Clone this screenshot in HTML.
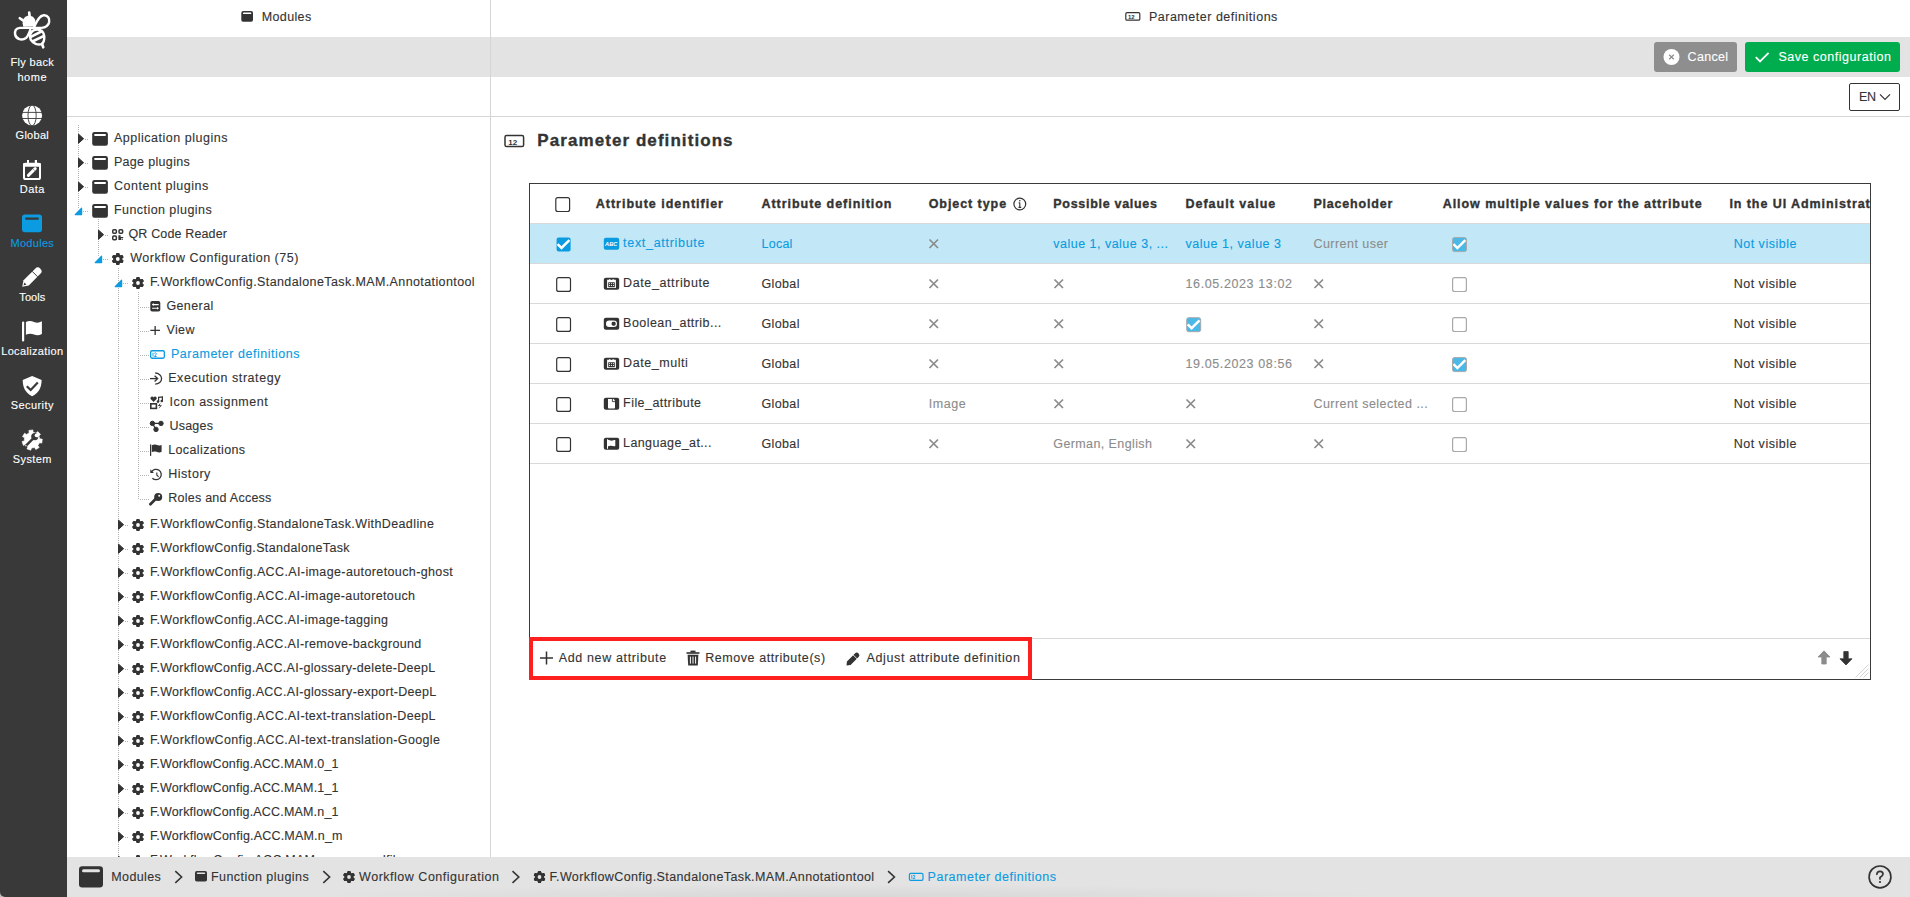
<!DOCTYPE html><html><head><meta charset="utf-8"><title>Parameter definitions</title><style>
*{box-sizing:border-box;margin:0;padding:0}
html,body{width:1910px;height:897px;overflow:hidden;background:#fff;font-family:"Liberation Sans",sans-serif;color:#333}
.a{position:absolute}
.t{position:absolute;white-space:pre;line-height:20px}
svg.ov{position:absolute;left:0;top:0;width:1910px;height:897px;overflow:visible}
</style></head><body>
<div class="a" style="left:0;top:889px;width:10px;height:8px;background:#bcbcbc"></div>
<div class="a" style="left:0;top:0;width:67px;height:897px;background:#393939;border-bottom-left-radius:5px"></div>
<div class="a" style="left:67px;top:37px;width:1843px;height:40px;background:#e3e3e3"></div>
<div class="a" style="left:67px;top:116px;width:1843px;height:1px;background:#d5d5d5"></div>
<div class="a" style="left:490px;top:0;width:1px;height:857px;background:#d5d5d5"></div>
<div class="a" style="left:1654px;top:42px;width:83px;height:30px;background:#8e8e8e;border-radius:3px"></div>
<div class="a" style="left:1745px;top:42px;width:155px;height:30px;background:#00ad4e;border-radius:3px"></div>
<div class="a" style="left:1849px;top:83px;width:51px;height:28px;border:1px solid #333333;border-radius:2px;background:#fff"></div>
<div class="a" style="left:529px;top:183px;width:1342px;height:497px;border:1px solid #3a3a3a"></div>
<div class="a" style="left:530px;top:224px;width:1340px;height:39px;background:#c2e8f7"></div>
<div class="a" style="left:530px;top:223px;width:1340px;height:1px;background:#d9d9d9"></div>
<div class="a" style="left:530px;top:263px;width:1340px;height:1px;background:#d9d9d9"></div>
<div class="a" style="left:530px;top:303px;width:1340px;height:1px;background:#d9d9d9"></div>
<div class="a" style="left:530px;top:343px;width:1340px;height:1px;background:#d9d9d9"></div>
<div class="a" style="left:530px;top:383px;width:1340px;height:1px;background:#d9d9d9"></div>
<div class="a" style="left:530px;top:423px;width:1340px;height:1px;background:#d9d9d9"></div>
<div class="a" style="left:530px;top:463px;width:1340px;height:1px;background:#d9d9d9"></div>
<div class="a" style="left:530px;top:638px;width:1340px;height:1px;background:#d9d9d9"></div>
<div class="a" style="left:529px;top:637px;width:503px;height:43px;border:4px solid #fe1f1f"></div>
<svg class="ov" viewBox="0 0 1910 897"><g transform="translate(8,5) scale(0.05574)" fill="none" stroke="#fff" stroke-width="44" stroke-linejoin="round" stroke-linecap="round"><path d="M262 330 C262 240 310 195 378 195 C450 195 495 245 495 320 L470 385 L275 390 Z" fill="#fff" stroke="none"/><path d="M212 238 L262 272" stroke-width="48"/><path d="M380 138 L388 200" stroke-width="48"/><path d="M400 410 L215 410 C140 410 118 470 128 530 C143 612 250 645 322 592 C352 567 372 522 400 445"/><path d="M470 390 C520 290 560 190 640 185 C722 180 748 250 738 310 C722 382 660 405 600 410 L400 410"/><path d="M398 530 C418 468 470 438 532 438 C602 438 645 500 650 560 C655 632 632 682 602 702 C540 722 448 692 408 622 C393 592 391 560 398 530 Z"/><path d="M400 575 L625 462" stroke-width="46" stroke-linecap="butt"/><path d="M438 655 L655 548" stroke-width="46" stroke-linecap="butt"/><path d="M612 700 L632 758" stroke-width="48"/></g><circle cx="32.1" cy="115.4" r="10" fill="#fff"/><g stroke="#393939" stroke-width="0.9" fill="none"><ellipse cx="32.1" cy="115.4" rx="4.1" ry="10.4"/><line x1="21" y1="112.4" x2="43" y2="112.4"/><line x1="21" y1="118.5" x2="43" y2="118.5"/></g><g><rect x="24" y="163.8" width="16" height="15.3" rx="1.6" fill="none" stroke="#fff" stroke-width="2"/><rect x="23" y="162.9" width="18" height="3.8" rx="1.2" fill="#fff"/><rect x="27" y="160" width="2" height="4" fill="#fff"/><rect x="34.8" y="160" width="2.2" height="4" fill="#fff"/><path d="M28.4 175.4 L35.2 168.6" stroke="#fff" stroke-width="3" stroke-linecap="round"/><path d="M33.3 169.3 L34.5 170.5" stroke="#393939" stroke-width="0.7"/></g><rect x="22" y="214.5" width="20" height="17.7" rx="3" fill="#0b9be0"/><rect x="25" y="217.5" width="14" height="2.2" rx="1.1" fill="#393939"/><g transform="translate(22.2,286.8) rotate(-45)"><path d="M0 0 L5.6 -3.7 L22 -3.7 A3.7 3.7 0 0 1 22 3.7 L5.6 3.7 Z" fill="#fff"/><line x1="18" y1="-3.9" x2="18" y2="3.9" stroke="#393939" stroke-width="0.9"/><path d="M1.8 0 L4.6 -1.4 L4.6 1.4 Z" fill="#393939"/></g><rect x="22" y="321.4" width="2.2" height="20" rx="1" fill="#fff"/><path d="M25.9 322 C29 320.6 31.5 321 34 322 C36.5 323 39 323 41.9 321.3 L41.9 334 C39 335.6 36.5 335.5 34 334.6 C31.5 333.6 29 333.4 25.9 334.8 Z" fill="#fff"/><path d="M32.1 376 L41.6 380 C41.6 388 38.5 393 32.1 396.2 C25.8 393 22.7 388 22.7 380 Z" fill="#fff"/><path d="M26.8 386.2 L30.7 390 L37.8 382.6" fill="none" stroke="#393939" stroke-width="2.2"/><path d="M39.91 438.92 L42.25 439.08 L41.84 443.11 L39.52 442.81 L37.89 445.47 L39.22 447.40 L35.82 449.60 L34.61 447.59 L31.51 447.98 L30.83 450.22 L26.99 448.93 L27.81 446.73 L25.57 444.55 L23.40 445.42 L22.01 441.61 L24.24 440.88 L24.55 437.77 L22.51 436.61 L24.63 433.16 L26.59 434.44 L29.21 432.75 L28.85 430.43 L32.87 429.93 L33.09 432.26 L36.05 433.26 L37.63 431.53 L40.53 434.36 L38.84 435.99 Z" fill="#fff" stroke="#fff" stroke-width="0.6" stroke-linejoin="round"/><g fill="#393939"><path d="M25.8 445.9 L33.5 438.2" stroke="#393939" stroke-width="2.4" stroke-linecap="round"/><circle cx="34.8" cy="436.6" r="3.6"/></g><circle cx="36.6" cy="435.3" r="1.9" fill="#fff"/><path d="M36.4 433.2 L39.6 434.8 L37.8 438.0 Z" fill="#fff"/><circle cx="25.9" cy="445.8" r="0.7" fill="#fff"/><rect x="241.3" y="11.1" width="11.7" height="10.6" rx="1.8" fill="#333333"/><rect x="243" y="12.6" width="8.3" height="1.5" rx="0.7" fill="#fff"/><rect x="1125.8" y="12.6" width="14" height="7.6" rx="1.3" fill="none" stroke="#333333" stroke-width="1.2"/><text x="1128" y="18.9" font-family="Liberation Sans" font-size="6" font-weight="bold" fill="#333333">12</text><circle cx="1671.5" cy="57" r="8" fill="#fff"/><path d="M1669.2 54.7 L1673.8 59.3 M1673.8 54.7 L1669.2 59.3" stroke="#8e8e8e" stroke-width="1.3"/><path d="M1755.8 57.2 L1760 61.4 L1768.6 52.8" fill="none" stroke="#fff" stroke-width="1.8"/><path d="M1880 94.3 L1885 99.3 L1890 94.3" fill="none" stroke="#333333" stroke-width="1.2"/><rect x="505" y="135.6" width="18.6" height="11" rx="1.6" fill="none" stroke="#333333" stroke-width="1.5"/><text x="508.3" y="144.6" font-family="Liberation Sans" font-size="8" font-weight="bold" fill="#333333">12</text><line x1="78.5" y1="125" x2="78.5" y2="208" stroke="#b5b5b5" stroke-width="1" stroke-dasharray="1 1"/><line x1="98.5" y1="219" x2="98.5" y2="256" stroke="#b5b5b5" stroke-width="1" stroke-dasharray="1 1"/><line x1="118.5" y1="268" x2="118.5" y2="857" stroke="#b5b5b5" stroke-width="1" stroke-dasharray="1 1"/><line x1="138.5" y1="292" x2="138.5" y2="499" stroke="#b5b5b5" stroke-width="1" stroke-dasharray="1 1"/><line x1="85" y1="139.5" x2="88" y2="139.5" stroke="#b5b5b5" stroke-width="1" stroke-dasharray="1 1"/><path d="M78.5 134.1 L83.6 138.7 L78.5 143.29999999999998 Z" fill="#333333" stroke="#333333" stroke-width="1" stroke-linejoin="round"/><rect x="92.2" y="132" width="15.7" height="13.8" rx="2.2" fill="#333333"/><rect x="94.10000000000001" y="133.9" width="11.9" height="2.1" rx="1" fill="#fff"/><line x1="85" y1="163.5" x2="88" y2="163.5" stroke="#b5b5b5" stroke-width="1" stroke-dasharray="1 1"/><path d="M78.5 158.1 L83.6 162.7 L78.5 167.29999999999998 Z" fill="#333333" stroke="#333333" stroke-width="1" stroke-linejoin="round"/><rect x="92.2" y="156" width="15.7" height="13.8" rx="2.2" fill="#333333"/><rect x="94.10000000000001" y="157.9" width="11.9" height="2.1" rx="1" fill="#fff"/><line x1="85" y1="187.5" x2="88" y2="187.5" stroke="#b5b5b5" stroke-width="1" stroke-dasharray="1 1"/><path d="M78.5 182.1 L83.6 186.7 L78.5 191.29999999999998 Z" fill="#333333" stroke="#333333" stroke-width="1" stroke-linejoin="round"/><rect x="92.2" y="180" width="15.7" height="13.8" rx="2.2" fill="#333333"/><rect x="94.10000000000001" y="181.9" width="11.9" height="2.1" rx="1" fill="#fff"/><line x1="83" y1="211.5" x2="88" y2="211.5" stroke="#b5b5b5" stroke-width="1" stroke-dasharray="1 1"/><path d="M75.19999999999999 214.6 L81.6 208.1 L81.6 214.6 Z" fill="#0b9be0" stroke="#0b9be0" stroke-width="1.2" stroke-linejoin="round"/><rect x="92.2" y="204" width="15.7" height="13.8" rx="2.2" fill="#333333"/><rect x="94.10000000000001" y="205.9" width="11.9" height="2.1" rx="1" fill="#fff"/><line x1="105" y1="235.5" x2="108" y2="235.5" stroke="#b5b5b5" stroke-width="1" stroke-dasharray="1 1"/><path d="M98.5 230.1 L103.6 234.7 L98.5 239.29999999999998 Z" fill="#333333" stroke="#333333" stroke-width="1" stroke-linejoin="round"/><rect x="112.75" y="229.75" width="3.6" height="3.6" rx="1" fill="none" stroke="#333333" stroke-width="1.5"/><rect x="119.05" y="229.75" width="3.6" height="3.6" rx="1" fill="none" stroke="#333333" stroke-width="1.5"/><rect x="112.75" y="236.05" width="3.6" height="3.6" rx="1" fill="none" stroke="#333333" stroke-width="1.5"/><path d="M118.4 235.3 h2.2 v1.6 h2.6 v1.2 h-2 v2 h-2.8 Z" fill="#333333"/><rect x="121.7" y="238.6" width="1.2" height="1.2" fill="#333333"/><line x1="103" y1="259.5" x2="108" y2="259.5" stroke="#b5b5b5" stroke-width="1" stroke-dasharray="1 1"/><path d="M95.19999999999999 262.59999999999997 L101.6 256.09999999999997 L101.6 262.59999999999997 Z" fill="#0b9be0" stroke="#0b9be0" stroke-width="1.2" stroke-linejoin="round"/><g transform="translate(117.8,259)" fill="#333333"><rect x="-1.70" y="-6.00" width="3.40" height="12.00" rx="1.20" transform="rotate(0)"/><rect x="-1.70" y="-6.00" width="3.40" height="12.00" rx="1.20" transform="rotate(60)"/><rect x="-1.70" y="-6.00" width="3.40" height="12.00" rx="1.20" transform="rotate(120)"/><rect x="-1.70" y="-6.00" width="3.40" height="12.00" rx="1.20" transform="rotate(180)"/><rect x="-1.70" y="-6.00" width="3.40" height="12.00" rx="1.20" transform="rotate(240)"/><rect x="-1.70" y="-6.00" width="3.40" height="12.00" rx="1.20" transform="rotate(300)"/><circle r="4.60"/><circle r="1.90" fill="#fff"/></g><line x1="123" y1="283.5" x2="128" y2="283.5" stroke="#b5b5b5" stroke-width="1" stroke-dasharray="1 1"/><path d="M115.19999999999999 286.59999999999997 L121.6 280.09999999999997 L121.6 286.59999999999997 Z" fill="#0b9be0" stroke="#0b9be0" stroke-width="1.2" stroke-linejoin="round"/><g transform="translate(138.0,283)" fill="#333333"><rect x="-1.70" y="-6.00" width="3.40" height="12.00" rx="1.20" transform="rotate(0)"/><rect x="-1.70" y="-6.00" width="3.40" height="12.00" rx="1.20" transform="rotate(60)"/><rect x="-1.70" y="-6.00" width="3.40" height="12.00" rx="1.20" transform="rotate(120)"/><rect x="-1.70" y="-6.00" width="3.40" height="12.00" rx="1.20" transform="rotate(180)"/><rect x="-1.70" y="-6.00" width="3.40" height="12.00" rx="1.20" transform="rotate(240)"/><rect x="-1.70" y="-6.00" width="3.40" height="12.00" rx="1.20" transform="rotate(300)"/><circle r="4.60"/><circle r="1.90" fill="#fff"/></g><line x1="140" y1="307.5" x2="149" y2="307.5" stroke="#b5b5b5" stroke-width="1" stroke-dasharray="1 1"/><rect x="150.3" y="301" width="10" height="10.6" rx="1.8" fill="#333333"/><path d="M152.5 304.6 h6.2 M152.10000000000002 308.2 h6.0" stroke="#fff" stroke-width="1.1"/><path d="M151.9 304.6 l1.8 -1.5 v3 Z M158.9 308.2 l-1.8 -1.5 v3 Z" fill="#fff"/><line x1="140" y1="331.5" x2="149" y2="331.5" stroke="#b5b5b5" stroke-width="1" stroke-dasharray="1 1"/><path d="M155.15 325.9 v9 M150.3 330.4 h9.7" stroke="#333333" stroke-width="1.3"/><line x1="140" y1="355.5" x2="149" y2="355.5" stroke="#b5b5b5" stroke-width="1" stroke-dasharray="1 1"/><rect x="150.65" y="350.75" width="13.7" height="7.500000000000001" rx="1.4" fill="none" stroke="#0b9be0" stroke-width="1.3"/><path d="M153 352.70000000000005 v3.8 M154.4 353.3 q1.6 -1.2 1.9 0.3 q0 1 -1.9 2.9 h2.2" fill="none" stroke="#0b9be0" stroke-width="0.9"/><line x1="140" y1="379.5" x2="149" y2="379.5" stroke="#b5b5b5" stroke-width="1" stroke-dasharray="1 1"/><path d="M150 378.6 h7.2" stroke="#333333" stroke-width="1.3"/><path d="M154.6 375.8 L157.6 378.6 L154.6 381.40000000000003" fill="none" stroke="#333333" stroke-width="1.3"/><path d="M155.2 373.0 A6.4 5.6 0 0 1 155.2 384.20000000000005" fill="none" stroke="#333333" stroke-width="1.3"/><line x1="140" y1="403.5" x2="149" y2="403.5" stroke="#b5b5b5" stroke-width="1" stroke-dasharray="1 1"/><path d="M153.6 402.0 L150.6 399.0 A1.6 1.6 0 0 1 153.6 397.5 A1.6 1.6 0 0 1 156.6 399.0 Z" fill="#333333"/><path d="M158.6 401.40000000000003 V397.40000000000003 L162.4 396.90000000000003 V400.8" fill="none" stroke="#333333" stroke-width="1.2"/><circle cx="158.0" cy="401.6" r="1.3" fill="#333333"/><circle cx="161.8" cy="401.0" r="1.3" fill="#333333"/><rect x="150.8" y="403.8" width="5.6" height="4.6" fill="none" stroke="#333333" stroke-width="1.6"/><path d="M160.6 402.8 L157.8 406.0 H160 L158.6 408.8 L162.0 405.20000000000005 H159.8 Z" fill="#333333"/><line x1="140" y1="427.5" x2="149" y2="427.5" stroke="#b5b5b5" stroke-width="1" stroke-dasharray="1 1"/><g fill="#333333" stroke="#333333"><circle cx="152.4" cy="423.40000000000003" r="2.2"/><circle cx="161.0" cy="423.40000000000003" r="2.2"/><circle cx="156.0" cy="429.40000000000003" r="2.2"/><path d="M152.4 423.40000000000003 H161 M152.4 423.40000000000003 L156 429.40000000000003" stroke-width="1.2"/></g><line x1="140" y1="451.5" x2="149" y2="451.5" stroke="#b5b5b5" stroke-width="1" stroke-dasharray="1 1"/><rect x="150" y="444.4" width="1.2" height="11.5" fill="#333333"/><path d="M151.8 445.2 C154 444.2 156 444.59999999999997 158 445.2 C159.8 445.7 160.8 445.4 161.6 445.0 V451.79999999999995 C160 452.79999999999995 158 452.4 156.5 451.79999999999995 C154.8 451.2 153.2 451.59999999999997 151.8 452.0 Z" fill="#333333"/><line x1="140" y1="475.5" x2="149" y2="475.5" stroke="#b5b5b5" stroke-width="1" stroke-dasharray="1 1"/><path d="M151.6 471.79999999999995 A5.2 5.2 0 1 1 152.4 478.2" fill="none" stroke="#333333" stroke-width="1.3"/><path d="M150.3 469.2 L150.3 473.0 L153.9 473.0 Z" fill="#333333"/><path d="M156.8 472.59999999999997 V475.0 L158.6 476.79999999999995" fill="none" stroke="#333333" stroke-width="1.1"/><line x1="140" y1="499.5" x2="149" y2="499.5" stroke="#b5b5b5" stroke-width="1" stroke-dasharray="1 1"/><g fill="#333333"><circle cx="158.2" cy="497.0" r="4.0"/><path d="M150.4 504.20000000000005 L155.6 499.0" stroke="#333333" stroke-width="2.7" stroke-linecap="round"/></g><circle cx="159.2" cy="495.8" r="1.0" fill="#fff"/><line x1="125" y1="525.5" x2="128" y2="525.5" stroke="#b5b5b5" stroke-width="1" stroke-dasharray="1 1"/><path d="M118.5 520.1 L123.6 524.7 L118.5 529.3000000000001 Z" fill="#333333" stroke="#333333" stroke-width="1" stroke-linejoin="round"/><g transform="translate(138.0,525)" fill="#333333"><rect x="-1.70" y="-6.00" width="3.40" height="12.00" rx="1.20" transform="rotate(0)"/><rect x="-1.70" y="-6.00" width="3.40" height="12.00" rx="1.20" transform="rotate(60)"/><rect x="-1.70" y="-6.00" width="3.40" height="12.00" rx="1.20" transform="rotate(120)"/><rect x="-1.70" y="-6.00" width="3.40" height="12.00" rx="1.20" transform="rotate(180)"/><rect x="-1.70" y="-6.00" width="3.40" height="12.00" rx="1.20" transform="rotate(240)"/><rect x="-1.70" y="-6.00" width="3.40" height="12.00" rx="1.20" transform="rotate(300)"/><circle r="4.60"/><circle r="1.90" fill="#fff"/></g><line x1="125" y1="549.5" x2="128" y2="549.5" stroke="#b5b5b5" stroke-width="1" stroke-dasharray="1 1"/><path d="M118.5 544.1 L123.6 548.7 L118.5 553.3000000000001 Z" fill="#333333" stroke="#333333" stroke-width="1" stroke-linejoin="round"/><g transform="translate(138.0,549)" fill="#333333"><rect x="-1.70" y="-6.00" width="3.40" height="12.00" rx="1.20" transform="rotate(0)"/><rect x="-1.70" y="-6.00" width="3.40" height="12.00" rx="1.20" transform="rotate(60)"/><rect x="-1.70" y="-6.00" width="3.40" height="12.00" rx="1.20" transform="rotate(120)"/><rect x="-1.70" y="-6.00" width="3.40" height="12.00" rx="1.20" transform="rotate(180)"/><rect x="-1.70" y="-6.00" width="3.40" height="12.00" rx="1.20" transform="rotate(240)"/><rect x="-1.70" y="-6.00" width="3.40" height="12.00" rx="1.20" transform="rotate(300)"/><circle r="4.60"/><circle r="1.90" fill="#fff"/></g><line x1="125" y1="573.5" x2="128" y2="573.5" stroke="#b5b5b5" stroke-width="1" stroke-dasharray="1 1"/><path d="M118.5 568.1 L123.6 572.7 L118.5 577.3000000000001 Z" fill="#333333" stroke="#333333" stroke-width="1" stroke-linejoin="round"/><g transform="translate(138.0,573)" fill="#333333"><rect x="-1.70" y="-6.00" width="3.40" height="12.00" rx="1.20" transform="rotate(0)"/><rect x="-1.70" y="-6.00" width="3.40" height="12.00" rx="1.20" transform="rotate(60)"/><rect x="-1.70" y="-6.00" width="3.40" height="12.00" rx="1.20" transform="rotate(120)"/><rect x="-1.70" y="-6.00" width="3.40" height="12.00" rx="1.20" transform="rotate(180)"/><rect x="-1.70" y="-6.00" width="3.40" height="12.00" rx="1.20" transform="rotate(240)"/><rect x="-1.70" y="-6.00" width="3.40" height="12.00" rx="1.20" transform="rotate(300)"/><circle r="4.60"/><circle r="1.90" fill="#fff"/></g><line x1="125" y1="597.5" x2="128" y2="597.5" stroke="#b5b5b5" stroke-width="1" stroke-dasharray="1 1"/><path d="M118.5 592.1 L123.6 596.7 L118.5 601.3000000000001 Z" fill="#333333" stroke="#333333" stroke-width="1" stroke-linejoin="round"/><g transform="translate(138.0,597)" fill="#333333"><rect x="-1.70" y="-6.00" width="3.40" height="12.00" rx="1.20" transform="rotate(0)"/><rect x="-1.70" y="-6.00" width="3.40" height="12.00" rx="1.20" transform="rotate(60)"/><rect x="-1.70" y="-6.00" width="3.40" height="12.00" rx="1.20" transform="rotate(120)"/><rect x="-1.70" y="-6.00" width="3.40" height="12.00" rx="1.20" transform="rotate(180)"/><rect x="-1.70" y="-6.00" width="3.40" height="12.00" rx="1.20" transform="rotate(240)"/><rect x="-1.70" y="-6.00" width="3.40" height="12.00" rx="1.20" transform="rotate(300)"/><circle r="4.60"/><circle r="1.90" fill="#fff"/></g><line x1="125" y1="621.5" x2="128" y2="621.5" stroke="#b5b5b5" stroke-width="1" stroke-dasharray="1 1"/><path d="M118.5 616.1 L123.6 620.7 L118.5 625.3000000000001 Z" fill="#333333" stroke="#333333" stroke-width="1" stroke-linejoin="round"/><g transform="translate(138.0,621)" fill="#333333"><rect x="-1.70" y="-6.00" width="3.40" height="12.00" rx="1.20" transform="rotate(0)"/><rect x="-1.70" y="-6.00" width="3.40" height="12.00" rx="1.20" transform="rotate(60)"/><rect x="-1.70" y="-6.00" width="3.40" height="12.00" rx="1.20" transform="rotate(120)"/><rect x="-1.70" y="-6.00" width="3.40" height="12.00" rx="1.20" transform="rotate(180)"/><rect x="-1.70" y="-6.00" width="3.40" height="12.00" rx="1.20" transform="rotate(240)"/><rect x="-1.70" y="-6.00" width="3.40" height="12.00" rx="1.20" transform="rotate(300)"/><circle r="4.60"/><circle r="1.90" fill="#fff"/></g><line x1="125" y1="645.5" x2="128" y2="645.5" stroke="#b5b5b5" stroke-width="1" stroke-dasharray="1 1"/><path d="M118.5 640.1 L123.6 644.7 L118.5 649.3000000000001 Z" fill="#333333" stroke="#333333" stroke-width="1" stroke-linejoin="round"/><g transform="translate(138.0,645)" fill="#333333"><rect x="-1.70" y="-6.00" width="3.40" height="12.00" rx="1.20" transform="rotate(0)"/><rect x="-1.70" y="-6.00" width="3.40" height="12.00" rx="1.20" transform="rotate(60)"/><rect x="-1.70" y="-6.00" width="3.40" height="12.00" rx="1.20" transform="rotate(120)"/><rect x="-1.70" y="-6.00" width="3.40" height="12.00" rx="1.20" transform="rotate(180)"/><rect x="-1.70" y="-6.00" width="3.40" height="12.00" rx="1.20" transform="rotate(240)"/><rect x="-1.70" y="-6.00" width="3.40" height="12.00" rx="1.20" transform="rotate(300)"/><circle r="4.60"/><circle r="1.90" fill="#fff"/></g><line x1="125" y1="669.5" x2="128" y2="669.5" stroke="#b5b5b5" stroke-width="1" stroke-dasharray="1 1"/><path d="M118.5 664.1 L123.6 668.7 L118.5 673.3000000000001 Z" fill="#333333" stroke="#333333" stroke-width="1" stroke-linejoin="round"/><g transform="translate(138.0,669)" fill="#333333"><rect x="-1.70" y="-6.00" width="3.40" height="12.00" rx="1.20" transform="rotate(0)"/><rect x="-1.70" y="-6.00" width="3.40" height="12.00" rx="1.20" transform="rotate(60)"/><rect x="-1.70" y="-6.00" width="3.40" height="12.00" rx="1.20" transform="rotate(120)"/><rect x="-1.70" y="-6.00" width="3.40" height="12.00" rx="1.20" transform="rotate(180)"/><rect x="-1.70" y="-6.00" width="3.40" height="12.00" rx="1.20" transform="rotate(240)"/><rect x="-1.70" y="-6.00" width="3.40" height="12.00" rx="1.20" transform="rotate(300)"/><circle r="4.60"/><circle r="1.90" fill="#fff"/></g><line x1="125" y1="693.5" x2="128" y2="693.5" stroke="#b5b5b5" stroke-width="1" stroke-dasharray="1 1"/><path d="M118.5 688.1 L123.6 692.7 L118.5 697.3000000000001 Z" fill="#333333" stroke="#333333" stroke-width="1" stroke-linejoin="round"/><g transform="translate(138.0,693)" fill="#333333"><rect x="-1.70" y="-6.00" width="3.40" height="12.00" rx="1.20" transform="rotate(0)"/><rect x="-1.70" y="-6.00" width="3.40" height="12.00" rx="1.20" transform="rotate(60)"/><rect x="-1.70" y="-6.00" width="3.40" height="12.00" rx="1.20" transform="rotate(120)"/><rect x="-1.70" y="-6.00" width="3.40" height="12.00" rx="1.20" transform="rotate(180)"/><rect x="-1.70" y="-6.00" width="3.40" height="12.00" rx="1.20" transform="rotate(240)"/><rect x="-1.70" y="-6.00" width="3.40" height="12.00" rx="1.20" transform="rotate(300)"/><circle r="4.60"/><circle r="1.90" fill="#fff"/></g><line x1="125" y1="717.5" x2="128" y2="717.5" stroke="#b5b5b5" stroke-width="1" stroke-dasharray="1 1"/><path d="M118.5 712.1 L123.6 716.7 L118.5 721.3000000000001 Z" fill="#333333" stroke="#333333" stroke-width="1" stroke-linejoin="round"/><g transform="translate(138.0,717)" fill="#333333"><rect x="-1.70" y="-6.00" width="3.40" height="12.00" rx="1.20" transform="rotate(0)"/><rect x="-1.70" y="-6.00" width="3.40" height="12.00" rx="1.20" transform="rotate(60)"/><rect x="-1.70" y="-6.00" width="3.40" height="12.00" rx="1.20" transform="rotate(120)"/><rect x="-1.70" y="-6.00" width="3.40" height="12.00" rx="1.20" transform="rotate(180)"/><rect x="-1.70" y="-6.00" width="3.40" height="12.00" rx="1.20" transform="rotate(240)"/><rect x="-1.70" y="-6.00" width="3.40" height="12.00" rx="1.20" transform="rotate(300)"/><circle r="4.60"/><circle r="1.90" fill="#fff"/></g><line x1="125" y1="741.5" x2="128" y2="741.5" stroke="#b5b5b5" stroke-width="1" stroke-dasharray="1 1"/><path d="M118.5 736.1 L123.6 740.7 L118.5 745.3000000000001 Z" fill="#333333" stroke="#333333" stroke-width="1" stroke-linejoin="round"/><g transform="translate(138.0,741)" fill="#333333"><rect x="-1.70" y="-6.00" width="3.40" height="12.00" rx="1.20" transform="rotate(0)"/><rect x="-1.70" y="-6.00" width="3.40" height="12.00" rx="1.20" transform="rotate(60)"/><rect x="-1.70" y="-6.00" width="3.40" height="12.00" rx="1.20" transform="rotate(120)"/><rect x="-1.70" y="-6.00" width="3.40" height="12.00" rx="1.20" transform="rotate(180)"/><rect x="-1.70" y="-6.00" width="3.40" height="12.00" rx="1.20" transform="rotate(240)"/><rect x="-1.70" y="-6.00" width="3.40" height="12.00" rx="1.20" transform="rotate(300)"/><circle r="4.60"/><circle r="1.90" fill="#fff"/></g><line x1="125" y1="765.5" x2="128" y2="765.5" stroke="#b5b5b5" stroke-width="1" stroke-dasharray="1 1"/><path d="M118.5 760.1 L123.6 764.7 L118.5 769.3000000000001 Z" fill="#333333" stroke="#333333" stroke-width="1" stroke-linejoin="round"/><g transform="translate(138.0,765)" fill="#333333"><rect x="-1.70" y="-6.00" width="3.40" height="12.00" rx="1.20" transform="rotate(0)"/><rect x="-1.70" y="-6.00" width="3.40" height="12.00" rx="1.20" transform="rotate(60)"/><rect x="-1.70" y="-6.00" width="3.40" height="12.00" rx="1.20" transform="rotate(120)"/><rect x="-1.70" y="-6.00" width="3.40" height="12.00" rx="1.20" transform="rotate(180)"/><rect x="-1.70" y="-6.00" width="3.40" height="12.00" rx="1.20" transform="rotate(240)"/><rect x="-1.70" y="-6.00" width="3.40" height="12.00" rx="1.20" transform="rotate(300)"/><circle r="4.60"/><circle r="1.90" fill="#fff"/></g><line x1="125" y1="789.5" x2="128" y2="789.5" stroke="#b5b5b5" stroke-width="1" stroke-dasharray="1 1"/><path d="M118.5 784.1 L123.6 788.7 L118.5 793.3000000000001 Z" fill="#333333" stroke="#333333" stroke-width="1" stroke-linejoin="round"/><g transform="translate(138.0,789)" fill="#333333"><rect x="-1.70" y="-6.00" width="3.40" height="12.00" rx="1.20" transform="rotate(0)"/><rect x="-1.70" y="-6.00" width="3.40" height="12.00" rx="1.20" transform="rotate(60)"/><rect x="-1.70" y="-6.00" width="3.40" height="12.00" rx="1.20" transform="rotate(120)"/><rect x="-1.70" y="-6.00" width="3.40" height="12.00" rx="1.20" transform="rotate(180)"/><rect x="-1.70" y="-6.00" width="3.40" height="12.00" rx="1.20" transform="rotate(240)"/><rect x="-1.70" y="-6.00" width="3.40" height="12.00" rx="1.20" transform="rotate(300)"/><circle r="4.60"/><circle r="1.90" fill="#fff"/></g><line x1="125" y1="813.5" x2="128" y2="813.5" stroke="#b5b5b5" stroke-width="1" stroke-dasharray="1 1"/><path d="M118.5 808.1 L123.6 812.7 L118.5 817.3000000000001 Z" fill="#333333" stroke="#333333" stroke-width="1" stroke-linejoin="round"/><g transform="translate(138.0,813)" fill="#333333"><rect x="-1.70" y="-6.00" width="3.40" height="12.00" rx="1.20" transform="rotate(0)"/><rect x="-1.70" y="-6.00" width="3.40" height="12.00" rx="1.20" transform="rotate(60)"/><rect x="-1.70" y="-6.00" width="3.40" height="12.00" rx="1.20" transform="rotate(120)"/><rect x="-1.70" y="-6.00" width="3.40" height="12.00" rx="1.20" transform="rotate(180)"/><rect x="-1.70" y="-6.00" width="3.40" height="12.00" rx="1.20" transform="rotate(240)"/><rect x="-1.70" y="-6.00" width="3.40" height="12.00" rx="1.20" transform="rotate(300)"/><circle r="4.60"/><circle r="1.90" fill="#fff"/></g><line x1="125" y1="837.5" x2="128" y2="837.5" stroke="#b5b5b5" stroke-width="1" stroke-dasharray="1 1"/><path d="M118.5 832.1 L123.6 836.7 L118.5 841.3000000000001 Z" fill="#333333" stroke="#333333" stroke-width="1" stroke-linejoin="round"/><g transform="translate(138.0,837)" fill="#333333"><rect x="-1.70" y="-6.00" width="3.40" height="12.00" rx="1.20" transform="rotate(0)"/><rect x="-1.70" y="-6.00" width="3.40" height="12.00" rx="1.20" transform="rotate(60)"/><rect x="-1.70" y="-6.00" width="3.40" height="12.00" rx="1.20" transform="rotate(120)"/><rect x="-1.70" y="-6.00" width="3.40" height="12.00" rx="1.20" transform="rotate(180)"/><rect x="-1.70" y="-6.00" width="3.40" height="12.00" rx="1.20" transform="rotate(240)"/><rect x="-1.70" y="-6.00" width="3.40" height="12.00" rx="1.20" transform="rotate(300)"/><circle r="4.60"/><circle r="1.90" fill="#fff"/></g><line x1="125" y1="861.5" x2="128" y2="861.5" stroke="#b5b5b5" stroke-width="1" stroke-dasharray="1 1"/><path d="M118.5 856.1 L123.6 860.7 L118.5 865.3000000000001 Z" fill="#333333" stroke="#333333" stroke-width="1" stroke-linejoin="round"/><g transform="translate(138.0,861)" fill="#333333"><rect x="-1.70" y="-6.00" width="3.40" height="12.00" rx="1.20" transform="rotate(0)"/><rect x="-1.70" y="-6.00" width="3.40" height="12.00" rx="1.20" transform="rotate(60)"/><rect x="-1.70" y="-6.00" width="3.40" height="12.00" rx="1.20" transform="rotate(120)"/><rect x="-1.70" y="-6.00" width="3.40" height="12.00" rx="1.20" transform="rotate(180)"/><rect x="-1.70" y="-6.00" width="3.40" height="12.00" rx="1.20" transform="rotate(240)"/><rect x="-1.70" y="-6.00" width="3.40" height="12.00" rx="1.20" transform="rotate(300)"/><circle r="4.60"/><circle r="1.90" fill="#fff"/></g><rect x="555.8000000000001" y="197.7" width="13.8" height="13.8" rx="2" fill="#fff" stroke="#333333" stroke-width="1.2"/><circle cx="1019.8" cy="204" r="5.9" fill="none" stroke="#333333" stroke-width="1.2"/><path d="M1019.8 202.6 V207.2 M1018.5 207.4 H1021.2 M1018.6 202.7 H1019.8" stroke="#333333" stroke-width="1.1"/><circle cx="1019.8" cy="200.7" r="0.8" fill="#333333"/><rect x="556.6" y="237.5" width="14" height="14" rx="2" fill="#0b9be0"/><path d="M557.6 244.1 L561.5 248 L569.4 240.1" fill="none" stroke="#fff" stroke-width="2.5"/><rect x="603.8" y="237.65" width="15.4" height="12.2" rx="2" fill="#0b9be0"/><text x="605.0999999999999" y="246.05" font-family="Liberation Sans" font-size="5.6" font-weight="bold" font-style="italic" fill="#fff">ABC</text><path d="M929.5 239.5 L938 248 M938 239.5 L929.5 248" stroke="#8a8a8a" stroke-width="1.7"/><rect x="1452.5" y="237.6" width="14" height="14" rx="2" fill="#4ab9e8" stroke="#a9a9a9" stroke-width="1"/><path d="M1453.5 244.2 L1457.4 248.1 L1465.3 240.2" fill="none" stroke="#fff" stroke-width="2.5"/><rect x="556.7" y="277.6" width="13.8" height="13.8" rx="2" fill="#fff" stroke="#333333" stroke-width="1.2"/><rect x="603.8" y="277.65" width="15.4" height="12.2" rx="2" fill="#333333"/><path d="M607.0999999999999 279.65 H609.0 Q609.5 278.84999999999997 610.0999999999999 279.25 Q611.5 280.65 612.9 279.25 Q613.5 278.84999999999997 614.0 279.65 H615.9 V288.04999999999995 H607.0999999999999 Z" fill="#fff"/><rect x="608.1999999999999" y="282.15" width="6.6" height="5.0" rx="0.5" fill="#333333"/><circle cx="609.40" cy="283.45" r="0.55" fill="#fff"/><circle cx="609.40" cy="285.40" r="0.55" fill="#fff"/><circle cx="611.40" cy="283.45" r="0.55" fill="#fff"/><circle cx="611.40" cy="285.40" r="0.55" fill="#fff"/><circle cx="613.40" cy="283.45" r="0.55" fill="#fff"/><circle cx="613.40" cy="285.40" r="0.55" fill="#fff"/><path d="M929.5 279.5 L938 288 M938 279.5 L929.5 288" stroke="#8a8a8a" stroke-width="1.7"/><path d="M1054.5 279.5 L1063 288 M1063 279.5 L1054.5 288" stroke="#8a8a8a" stroke-width="1.7"/><path d="M1314.5 279.5 L1323 288 M1323 279.5 L1314.5 288" stroke="#8a8a8a" stroke-width="1.7"/><rect x="1452.6" y="277.70000000000005" width="13.8" height="13.8" rx="2" fill="#fff" stroke="#a9a9a9" stroke-width="1.2"/><rect x="556.7" y="317.6" width="13.8" height="13.8" rx="2" fill="#fff" stroke="#333333" stroke-width="1.2"/><rect x="603.8" y="317.65" width="15.4" height="12.2" rx="2" fill="#333333"/><rect x="606.0" y="320.54999999999995" width="11" height="6.4" rx="3.2" fill="#fff"/><rect x="611.6999999999999" y="321.75" width="3.9" height="4" rx="1.4" fill="#333333"/><path d="M929.5 319.5 L938 328 M938 319.5 L929.5 328" stroke="#8a8a8a" stroke-width="1.7"/><path d="M1054.5 319.5 L1063 328 M1063 319.5 L1054.5 328" stroke="#8a8a8a" stroke-width="1.7"/><rect x="1186.7" y="317.7" width="14" height="14" rx="2" fill="#4ab9e8" stroke="#a9a9a9" stroke-width="1"/><path d="M1187.7 324.3 L1191.6000000000001 328.2 L1199.5 320.3" fill="none" stroke="#fff" stroke-width="2.5"/><path d="M1314.5 319.5 L1323 328 M1323 319.5 L1314.5 328" stroke="#8a8a8a" stroke-width="1.7"/><rect x="1452.6" y="317.70000000000005" width="13.8" height="13.8" rx="2" fill="#fff" stroke="#a9a9a9" stroke-width="1.2"/><rect x="556.7" y="357.6" width="13.8" height="13.8" rx="2" fill="#fff" stroke="#333333" stroke-width="1.2"/><rect x="603.8" y="357.65" width="15.4" height="12.2" rx="2" fill="#333333"/><path d="M607.0999999999999 359.65 H609.0 Q609.5 358.84999999999997 610.0999999999999 359.25 Q611.5 360.65 612.9 359.25 Q613.5 358.84999999999997 614.0 359.65 H615.9 V368.04999999999995 H607.0999999999999 Z" fill="#fff"/><rect x="608.1999999999999" y="362.15" width="6.6" height="5.0" rx="0.5" fill="#333333"/><circle cx="609.40" cy="363.45" r="0.55" fill="#fff"/><circle cx="609.40" cy="365.40" r="0.55" fill="#fff"/><circle cx="611.40" cy="363.45" r="0.55" fill="#fff"/><circle cx="611.40" cy="365.40" r="0.55" fill="#fff"/><circle cx="613.40" cy="363.45" r="0.55" fill="#fff"/><circle cx="613.40" cy="365.40" r="0.55" fill="#fff"/><path d="M929.5 359.5 L938 368 M938 359.5 L929.5 368" stroke="#8a8a8a" stroke-width="1.7"/><path d="M1054.5 359.5 L1063 368 M1063 359.5 L1054.5 368" stroke="#8a8a8a" stroke-width="1.7"/><path d="M1314.5 359.5 L1323 368 M1323 359.5 L1314.5 368" stroke="#8a8a8a" stroke-width="1.7"/><rect x="1452.5" y="357.6" width="14" height="14" rx="2" fill="#4ab9e8" stroke="#a9a9a9" stroke-width="1"/><path d="M1453.5 364.20000000000005 L1457.4 368.1 L1465.3 360.20000000000005" fill="none" stroke="#fff" stroke-width="2.5"/><rect x="556.7" y="397.6" width="13.8" height="13.8" rx="2" fill="#fff" stroke="#333333" stroke-width="1.2"/><rect x="603.8" y="397.65" width="15.4" height="12.2" rx="2" fill="#333333"/><path d="M608.0 398.95 H613.5999999999999 L615.0 400.45 V407.75 Q615.0 408.54999999999995 614.1999999999999 408.54999999999995 H608.8 Q608.0 408.54999999999995 608.0 407.75 Z" fill="#fff"/><path d="M612.4 398.84999999999997 V401.65 H615.1999999999999" fill="none" stroke="#333333" stroke-width="0.9"/><path d="M1054.5 399.5 L1063 408 M1063 399.5 L1054.5 408" stroke="#8a8a8a" stroke-width="1.7"/><path d="M1186.5 399.5 L1195 408 M1195 399.5 L1186.5 408" stroke="#8a8a8a" stroke-width="1.7"/><rect x="1452.6" y="397.70000000000005" width="13.8" height="13.8" rx="2" fill="#fff" stroke="#a9a9a9" stroke-width="1.2"/><rect x="556.7" y="437.6" width="13.8" height="13.8" rx="2" fill="#fff" stroke="#333333" stroke-width="1.2"/><rect x="603.8" y="437.65" width="15.4" height="12.2" rx="2" fill="#333333"/><path d="M607.0 439.25 H608.0 V448.65 H607.0 Z" fill="#fff"/><path d="M608.0 439.84999999999997 C609.8 440.45 611.8 441.04999999999995 613.4 440.25 C614.4 439.84999999999997 614.8 439.84999999999997 615.3 439.95 V446.04999999999995 C613.8 446.65 612.4 445.84999999999997 610.8 445.75 C609.5999999999999 445.65 608.8 445.95 608.0 446.25 Z" fill="#fff"/><path d="M929.5 439.5 L938 448 M938 439.5 L929.5 448" stroke="#8a8a8a" stroke-width="1.7"/><path d="M1186.5 439.5 L1195 448 M1195 439.5 L1186.5 448" stroke="#8a8a8a" stroke-width="1.7"/><path d="M1314.5 439.5 L1323 448 M1323 439.5 L1314.5 448" stroke="#8a8a8a" stroke-width="1.7"/><rect x="1452.6" y="437.70000000000005" width="13.8" height="13.8" rx="2" fill="#fff" stroke="#a9a9a9" stroke-width="1.2"/><path d="M546.5 651.4 V664.5 M540 657.95 H553" stroke="#333333" stroke-width="1.5"/><g fill="#333333"><rect x="686.5" y="652.2" width="13" height="1.6"/><rect x="690.5" y="650.6" width="5" height="2"/><path d="M687.6 654.8 H698.4 L697.8 665.6 H688.2 Z"/></g><path d="M690.4 656.6 V663.6 M693 656.6 V663.6 M695.6 656.6 V663.6" stroke="#fff" stroke-width="1"/><g transform="translate(846.5,665.5) rotate(-45)"><path d="M0 0 L3.2 -2.6 L14.5 -2.6 A2.6 2.6 0 0 1 14.5 2.6 L3.2 2.6 Z" fill="#333333"/><line x1="12.2" y1="-3" x2="12.2" y2="3" stroke="#fff" stroke-width="0.8"/></g><path d="M1824 650.8 L1830 657 H1826.2 V664 H1821.8 V657 H1818 Z" fill="#8c8c8c" stroke="#8c8c8c" stroke-width="0.8" stroke-linejoin="round"/><path d="M1846 665 L1852 658.8 H1848.2 V651.6 H1843.8 V658.8 H1840 Z" fill="#333333" stroke="#333333" stroke-width="0.8" stroke-linejoin="round"/><path d="M1855.5 677.5 L1868.5 664.5 M1859.5 677.5 L1868.5 668.5 M1863.5 677.5 L1868.5 672.5" stroke="#cfcfcf" stroke-width="0.9"/></svg>
<div class="t" style="left:10.57px;top:52.00px;font-size:11.0px;-webkit-text-stroke:0.12px #fff;font-weight:400;color:#fff;letter-spacing:0.312px">Fly back</div>
<div class="t" style="left:17.41px;top:67.00px;font-size:11.0px;-webkit-text-stroke:0.12px #fff;font-weight:400;color:#fff;letter-spacing:0.562px">home</div>
<div class="t" style="left:15.55px;top:124.70px;font-size:11.0px;-webkit-text-stroke:0.12px #fff;font-weight:400;color:#fff;letter-spacing:0.284px">Global</div>
<div class="t" style="left:19.76px;top:179.00px;font-size:11.0px;-webkit-text-stroke:0.12px #fff;font-weight:400;color:#fff;letter-spacing:0.457px">Data</div>
<div class="t" style="left:10.47px;top:232.80px;font-size:11.0px;-webkit-text-stroke:0.12px #0b9be0;font-weight:400;color:#0b9be0;letter-spacing:0.297px">Modules</div>
<div class="t" style="left:19.36px;top:286.70px;font-size:11.0px;-webkit-text-stroke:0.12px #fff;font-weight:400;color:#fff;letter-spacing:0.037px">Tools</div>
<div class="t" style="left:1.20px;top:340.50px;font-size:11.0px;-webkit-text-stroke:0.12px #fff;font-weight:400;color:#fff;letter-spacing:0.342px">Localization</div>
<div class="t" style="left:10.74px;top:394.80px;font-size:11.0px;-webkit-text-stroke:0.12px #fff;font-weight:400;color:#fff;letter-spacing:0.422px">Security</div>
<div class="t" style="left:12.72px;top:449.00px;font-size:11.0px;-webkit-text-stroke:0.12px #fff;font-weight:400;color:#fff;letter-spacing:0.411px">System</div>
<div class="t" style="left:261.70px;top:6.80px;font-size:12.5px;-webkit-text-stroke:0.12px #333333;font-weight:400;color:#333333;letter-spacing:0.377px">Modules</div>
<div class="t" style="left:1148.90px;top:6.70px;font-size:12.5px;-webkit-text-stroke:0.12px #333333;font-weight:400;color:#333333;letter-spacing:0.517px">Parameter definitions</div>
<div class="t" style="left:1687.60px;top:47.20px;font-size:12.5px;-webkit-text-stroke:0.12px #fff;font-weight:400;color:#fff;letter-spacing:0.289px">Cancel</div>
<div class="t" style="left:1778.50px;top:47.20px;font-size:12.5px;-webkit-text-stroke:0.12px #fff;font-weight:400;color:#fff;letter-spacing:0.518px">Save configuration</div>
<div class="t" style="left:1859.10px;top:86.70px;font-size:12.5px;-webkit-text-stroke:0.12px #333333;font-weight:400;color:#333333;letter-spacing:-0.406px">EN</div>
<div class="t" style="left:537.30px;top:130.80px;font-size:17.0px;-webkit-text-stroke:0.35px #333333;font-weight:700;color:#333333;letter-spacing:1.072px">Parameter definitions</div>
<div class="t" style="left:113.90px;top:128.00px;font-size:12.5px;-webkit-text-stroke:0.12px #333333;font-weight:400;color:#333333;letter-spacing:0.525px">Application plugins</div>
<div class="t" style="left:113.90px;top:152.00px;font-size:12.5px;-webkit-text-stroke:0.12px #333333;font-weight:400;color:#333333;letter-spacing:0.329px">Page plugins</div>
<div class="t" style="left:113.90px;top:176.00px;font-size:12.5px;-webkit-text-stroke:0.12px #333333;font-weight:400;color:#333333;letter-spacing:0.535px">Content plugins</div>
<div class="t" style="left:113.90px;top:200.00px;font-size:12.5px;-webkit-text-stroke:0.12px #333333;font-weight:400;color:#333333;letter-spacing:0.450px">Function plugins</div>
<div class="t" style="left:128.50px;top:224.00px;font-size:12.5px;-webkit-text-stroke:0.12px #333333;font-weight:400;color:#333333;letter-spacing:0.145px">QR Code Reader</div>
<div class="t" style="left:130.20px;top:248.00px;font-size:12.5px;-webkit-text-stroke:0.12px #333333;font-weight:400;color:#333333;letter-spacing:0.520px">Workflow Configuration (75)</div>
<div class="t" style="left:149.90px;top:272.00px;font-size:12.5px;-webkit-text-stroke:0.12px #333333;font-weight:400;color:#333333;letter-spacing:0.393px">F.WorkflowConfig.StandaloneTask.MAM.Annotationtool</div>
<div class="t" style="left:166.40px;top:296.00px;font-size:12.5px;-webkit-text-stroke:0.12px #333333;font-weight:400;color:#333333;letter-spacing:0.402px">General</div>
<div class="t" style="left:166.40px;top:320.00px;font-size:12.5px;-webkit-text-stroke:0.12px #333333;font-weight:400;color:#333333;letter-spacing:0.402px">View</div>
<div class="t" style="left:171.00px;top:344.00px;font-size:12.5px;-webkit-text-stroke:0.12px #0b9be0;font-weight:400;color:#0b9be0;letter-spacing:0.517px">Parameter definitions</div>
<div class="t" style="left:168.20px;top:368.00px;font-size:12.5px;-webkit-text-stroke:0.12px #333333;font-weight:400;color:#333333;letter-spacing:0.551px">Execution strategy</div>
<div class="t" style="left:169.50px;top:392.00px;font-size:12.5px;-webkit-text-stroke:0.12px #333333;font-weight:400;color:#333333;letter-spacing:0.511px">Icon assignment</div>
<div class="t" style="left:169.50px;top:416.00px;font-size:12.5px;-webkit-text-stroke:0.12px #333333;font-weight:400;color:#333333;letter-spacing:0.208px">Usages</div>
<div class="t" style="left:168.20px;top:440.00px;font-size:12.5px;-webkit-text-stroke:0.12px #333333;font-weight:400;color:#333333;letter-spacing:0.389px">Localizations</div>
<div class="t" style="left:168.20px;top:464.00px;font-size:12.5px;-webkit-text-stroke:0.12px #333333;font-weight:400;color:#333333;letter-spacing:0.542px">History</div>
<div class="t" style="left:168.20px;top:488.00px;font-size:12.5px;-webkit-text-stroke:0.12px #333333;font-weight:400;color:#333333;letter-spacing:0.253px">Roles and Access</div>
<div class="t" style="left:149.90px;top:514.00px;font-size:12.5px;-webkit-text-stroke:0.12px #333333;font-weight:400;color:#333333;letter-spacing:0.388px">F.WorkflowConfig.StandaloneTask.WithDeadline</div>
<div class="t" style="left:149.90px;top:538.00px;font-size:12.5px;-webkit-text-stroke:0.12px #333333;font-weight:400;color:#333333;letter-spacing:0.341px">F.WorkflowConfig.StandaloneTask</div>
<div class="t" style="left:149.90px;top:562.00px;font-size:12.5px;-webkit-text-stroke:0.12px #333333;font-weight:400;color:#333333;letter-spacing:0.383px">F.WorkflowConfig.ACC.AI-image-autoretouch-ghost</div>
<div class="t" style="left:149.90px;top:586.00px;font-size:12.5px;-webkit-text-stroke:0.12px #333333;font-weight:400;color:#333333;letter-spacing:0.364px">F.WorkflowConfig.ACC.AI-image-autoretouch</div>
<div class="t" style="left:149.90px;top:610.00px;font-size:12.5px;-webkit-text-stroke:0.12px #333333;font-weight:400;color:#333333;letter-spacing:0.348px">F.WorkflowConfig.ACC.AI-image-tagging</div>
<div class="t" style="left:149.90px;top:634.00px;font-size:12.5px;-webkit-text-stroke:0.12px #333333;font-weight:400;color:#333333;letter-spacing:0.347px">F.WorkflowConfig.ACC.AI-remove-background</div>
<div class="t" style="left:149.90px;top:658.00px;font-size:12.5px;-webkit-text-stroke:0.12px #333333;font-weight:400;color:#333333;letter-spacing:0.300px">F.WorkflowConfig.ACC.AI-glossary-delete-DeepL</div>
<div class="t" style="left:149.90px;top:682.00px;font-size:12.5px;-webkit-text-stroke:0.12px #333333;font-weight:400;color:#333333;letter-spacing:0.309px">F.WorkflowConfig.ACC.AI-glossary-export-DeepL</div>
<div class="t" style="left:149.90px;top:706.00px;font-size:12.5px;-webkit-text-stroke:0.12px #333333;font-weight:400;color:#333333;letter-spacing:0.363px">F.WorkflowConfig.ACC.AI-text-translation-DeepL</div>
<div class="t" style="left:149.90px;top:730.00px;font-size:12.5px;-webkit-text-stroke:0.12px #333333;font-weight:400;color:#333333;letter-spacing:0.376px">F.WorkflowConfig.ACC.AI-text-translation-Google</div>
<div class="t" style="left:149.90px;top:754.00px;font-size:12.5px;-webkit-text-stroke:0.12px #333333;font-weight:400;color:#333333;letter-spacing:0.176px">F.WorkflowConfig.ACC.MAM.0_1</div>
<div class="t" style="left:149.90px;top:778.00px;font-size:12.5px;-webkit-text-stroke:0.12px #333333;font-weight:400;color:#333333;letter-spacing:0.176px">F.WorkflowConfig.ACC.MAM.1_1</div>
<div class="t" style="left:149.90px;top:802.00px;font-size:12.5px;-webkit-text-stroke:0.12px #333333;font-weight:400;color:#333333;letter-spacing:0.175px">F.WorkflowConfig.ACC.MAM.n_1</div>
<div class="t" style="left:149.90px;top:826.00px;font-size:12.5px;-webkit-text-stroke:0.12px #333333;font-weight:400;color:#333333;letter-spacing:0.196px">F.WorkflowConfig.ACC.MAM.n_m</div>
<div class="t" style="left:149.90px;top:850.00px;font-size:12.5px;-webkit-text-stroke:0.12px #333333;font-weight:400;color:#333333;letter-spacing:0.244px">F.WorkflowConfig.ACC.MAM.process_pdfile</div>
<div class="t" style="left:595.80px;top:194.00px;font-size:12.5px;-webkit-text-stroke:0.35px #333333;font-weight:700;color:#333333;letter-spacing:0.991px">Attribute identifier</div>
<div class="t" style="left:761.50px;top:194.00px;font-size:12.5px;-webkit-text-stroke:0.35px #333333;font-weight:700;color:#333333;letter-spacing:0.955px">Attribute definition</div>
<div class="t" style="left:928.70px;top:194.00px;font-size:12.5px;-webkit-text-stroke:0.35px #333333;font-weight:700;color:#333333;letter-spacing:0.935px">Object type</div>
<div class="t" style="left:1053.30px;top:194.00px;font-size:12.5px;-webkit-text-stroke:0.35px #333333;font-weight:700;color:#333333;letter-spacing:0.701px">Possible values</div>
<div class="t" style="left:1185.50px;top:194.00px;font-size:12.5px;-webkit-text-stroke:0.35px #333333;font-weight:700;color:#333333;letter-spacing:0.992px">Default value</div>
<div class="t" style="left:1313.40px;top:194.00px;font-size:12.5px;-webkit-text-stroke:0.35px #333333;font-weight:700;color:#333333;letter-spacing:0.812px">Placeholder</div>
<div class="t" style="left:1442.70px;top:194.00px;font-size:12.5px;-webkit-text-stroke:0.35px #333333;font-weight:700;color:#333333;letter-spacing:0.946px">Allow multiple values for the attribute</div>
<div class="t" style="left:623.10px;top:233.30px;font-size:12.5px;-webkit-text-stroke:0.12px #0b9be0;font-weight:400;color:#0b9be0;letter-spacing:0.698px">text_attribute</div>
<div class="t" style="left:761.50px;top:234.30px;font-size:12.5px;-webkit-text-stroke:0.12px #0b9be0;font-weight:400;color:#0b9be0;letter-spacing:0.244px">Local</div>
<div class="t" style="left:1053.30px;top:234.30px;font-size:12.5px;-webkit-text-stroke:0.12px #0b9be0;font-weight:400;color:#0b9be0;letter-spacing:0.487px">value 1, value 3, ...</div>
<div class="t" style="left:1185.50px;top:234.30px;font-size:12.5px;-webkit-text-stroke:0.12px #0b9be0;font-weight:400;color:#0b9be0;letter-spacing:0.533px">value 1, value 3</div>
<div class="t" style="left:1313.40px;top:234.30px;font-size:12.5px;-webkit-text-stroke:0.12px #8c8c8c;font-weight:400;color:#8c8c8c;letter-spacing:0.465px">Current user</div>
<div class="t" style="left:1733.70px;top:234.30px;font-size:12.5px;-webkit-text-stroke:0.12px #0b9be0;font-weight:400;color:#0b9be0;letter-spacing:0.503px">Not visible</div>
<div class="t" style="left:623.10px;top:273.30px;font-size:12.5px;-webkit-text-stroke:0.12px #333333;font-weight:400;color:#333333;letter-spacing:0.607px">Date_attribute</div>
<div class="t" style="left:761.50px;top:274.30px;font-size:12.5px;-webkit-text-stroke:0.12px #333333;font-weight:400;color:#333333;letter-spacing:0.357px">Global</div>
<div class="t" style="left:1185.50px;top:274.30px;font-size:12.5px;-webkit-text-stroke:0.12px #8c8c8c;font-weight:400;color:#8c8c8c;letter-spacing:0.611px">16.05.2023 13:02</div>
<div class="t" style="left:1733.70px;top:274.30px;font-size:12.5px;-webkit-text-stroke:0.12px #333333;font-weight:400;color:#333333;letter-spacing:0.503px">Not visible</div>
<div class="t" style="left:623.10px;top:313.30px;font-size:12.5px;-webkit-text-stroke:0.12px #333333;font-weight:400;color:#333333;letter-spacing:0.449px">Boolean_attrib...</div>
<div class="t" style="left:761.50px;top:314.30px;font-size:12.5px;-webkit-text-stroke:0.12px #333333;font-weight:400;color:#333333;letter-spacing:0.357px">Global</div>
<div class="t" style="left:1733.70px;top:314.30px;font-size:12.5px;-webkit-text-stroke:0.12px #333333;font-weight:400;color:#333333;letter-spacing:0.503px">Not visible</div>
<div class="t" style="left:623.10px;top:353.30px;font-size:12.5px;-webkit-text-stroke:0.12px #333333;font-weight:400;color:#333333;letter-spacing:0.561px">Date_multi</div>
<div class="t" style="left:761.50px;top:354.30px;font-size:12.5px;-webkit-text-stroke:0.12px #333333;font-weight:400;color:#333333;letter-spacing:0.357px">Global</div>
<div class="t" style="left:1185.50px;top:354.30px;font-size:12.5px;-webkit-text-stroke:0.12px #8c8c8c;font-weight:400;color:#8c8c8c;letter-spacing:0.611px">19.05.2023 08:56</div>
<div class="t" style="left:1733.70px;top:354.30px;font-size:12.5px;-webkit-text-stroke:0.12px #333333;font-weight:400;color:#333333;letter-spacing:0.503px">Not visible</div>
<div class="t" style="left:623.10px;top:393.30px;font-size:12.5px;-webkit-text-stroke:0.12px #333333;font-weight:400;color:#333333;letter-spacing:0.440px">File_attribute</div>
<div class="t" style="left:761.50px;top:394.30px;font-size:12.5px;-webkit-text-stroke:0.12px #333333;font-weight:400;color:#333333;letter-spacing:0.357px">Global</div>
<div class="t" style="left:928.70px;top:394.30px;font-size:12.5px;-webkit-text-stroke:0.12px #8c8c8c;font-weight:400;color:#8c8c8c;letter-spacing:0.569px">Image</div>
<div class="t" style="left:1313.40px;top:394.30px;font-size:12.5px;-webkit-text-stroke:0.12px #8c8c8c;font-weight:400;color:#8c8c8c;letter-spacing:0.459px">Current selected ...</div>
<div class="t" style="left:1733.70px;top:394.30px;font-size:12.5px;-webkit-text-stroke:0.12px #333333;font-weight:400;color:#333333;letter-spacing:0.503px">Not visible</div>
<div class="t" style="left:623.10px;top:433.30px;font-size:12.5px;-webkit-text-stroke:0.12px #333333;font-weight:400;color:#333333;letter-spacing:0.379px">Language_at...</div>
<div class="t" style="left:761.50px;top:434.30px;font-size:12.5px;-webkit-text-stroke:0.12px #333333;font-weight:400;color:#333333;letter-spacing:0.357px">Global</div>
<div class="t" style="left:1053.30px;top:434.30px;font-size:12.5px;-webkit-text-stroke:0.12px #8c8c8c;font-weight:400;color:#8c8c8c;letter-spacing:0.394px">German, English</div>
<div class="t" style="left:1733.70px;top:434.30px;font-size:12.5px;-webkit-text-stroke:0.12px #333333;font-weight:400;color:#333333;letter-spacing:0.503px">Not visible</div>
<div class="t" style="left:558.80px;top:648.00px;font-size:12.5px;-webkit-text-stroke:0.12px #333333;font-weight:400;color:#333333;letter-spacing:0.631px">Add new attribute</div>
<div class="t" style="left:705.20px;top:648.00px;font-size:12.5px;-webkit-text-stroke:0.12px #333333;font-weight:400;color:#333333;letter-spacing:0.563px">Remove attribute(s)</div>
<div class="t" style="left:866.50px;top:648.00px;font-size:12.5px;-webkit-text-stroke:0.12px #333333;font-weight:400;color:#333333;letter-spacing:0.633px">Adjust attribute definition</div>
<div class="a" style="left:530px;top:184px;width:1340px;height:40px;overflow:hidden"><div class="t" style="left:-530px;margin-left:1729.40px;margin-top:-184px;top:194.00px;font-size:12.5px;-webkit-text-stroke:0.35px #333333;font-weight:700;color:#333333;letter-spacing:0.931px">In the UI Administration</div></div>
<div class="a" style="left:67px;top:857px;width:1843px;height:40px;background:#e3e3e3"></div><div class="a" style="left:300px;top:884px;width:1100px;height:13px;background:radial-gradient(ellipse 50% 100% at 50% 100%, rgba(0,0,0,0.05), rgba(0,0,0,0))"></div>
<svg class="ov" viewBox="0 0 1910 897"><rect x="79" y="866.3" width="24" height="21.2" rx="3.2" fill="#333333"/><rect x="82" y="869.2" width="18" height="3" rx="1.5" fill="#e3e3e3"/><path d="M175.3 871.2 L181.60000000000002 877 L175.3 882.8" fill="none" stroke="#333333" stroke-width="1.6"/><rect x="195" y="871" width="12" height="10.6" rx="1.8" fill="#333333"/><rect x="196.8" y="872.4" width="8.4" height="1.5" rx="0.7" fill="#e3e3e3"/><path d="M323.3 871.2 L329.6 877 L323.3 882.8" fill="none" stroke="#333333" stroke-width="1.6"/><g transform="translate(349,877)" fill="#333333"><rect x="-1.70" y="-6.00" width="3.40" height="12.00" rx="1.20" transform="rotate(0)"/><rect x="-1.70" y="-6.00" width="3.40" height="12.00" rx="1.20" transform="rotate(60)"/><rect x="-1.70" y="-6.00" width="3.40" height="12.00" rx="1.20" transform="rotate(120)"/><rect x="-1.70" y="-6.00" width="3.40" height="12.00" rx="1.20" transform="rotate(180)"/><rect x="-1.70" y="-6.00" width="3.40" height="12.00" rx="1.20" transform="rotate(240)"/><rect x="-1.70" y="-6.00" width="3.40" height="12.00" rx="1.20" transform="rotate(300)"/><circle r="4.60"/><circle r="1.90" fill="#e3e3e3"/></g><path d="M512.5 871.2 L518.8 877 L512.5 882.8" fill="none" stroke="#333333" stroke-width="1.6"/><g transform="translate(539.5,877)" fill="#333333"><rect x="-1.70" y="-6.00" width="3.40" height="12.00" rx="1.20" transform="rotate(0)"/><rect x="-1.70" y="-6.00" width="3.40" height="12.00" rx="1.20" transform="rotate(60)"/><rect x="-1.70" y="-6.00" width="3.40" height="12.00" rx="1.20" transform="rotate(120)"/><rect x="-1.70" y="-6.00" width="3.40" height="12.00" rx="1.20" transform="rotate(180)"/><rect x="-1.70" y="-6.00" width="3.40" height="12.00" rx="1.20" transform="rotate(240)"/><rect x="-1.70" y="-6.00" width="3.40" height="12.00" rx="1.20" transform="rotate(300)"/><circle r="4.60"/><circle r="1.90" fill="#e3e3e3"/></g><path d="M888.1 871.2 L894.4 877 L888.1 882.8" fill="none" stroke="#333333" stroke-width="1.6"/><rect x="909.4" y="873.4" width="13.6" height="7" rx="1.3" fill="none" stroke="#0b9be0" stroke-width="1.2"/><path d="M911.8 875 v3.6 M913.1 875.6 q1.5 -1.1 1.8 0.3 q0 0.9 -1.8 2.7 h2.1" fill="none" stroke="#0b9be0" stroke-width="0.85"/><circle cx="1880" cy="876.9" r="10.9" fill="none" stroke="#333333" stroke-width="1.7"/><path d="M1876.9 874.3 Q1877 871.3 1880 871.3 Q1883 871.3 1883 874 Q1883 875.8 1880 877.5 V879" fill="none" stroke="#333333" stroke-width="1.7" stroke-linecap="round"/><circle cx="1880" cy="882" r="1.1" fill="#333333"/></svg>
<div class="t" style="left:111.30px;top:866.80px;font-size:12.5px;-webkit-text-stroke:0.12px #333333;font-weight:400;color:#333333;letter-spacing:0.377px">Modules</div>
<div class="t" style="left:210.90px;top:866.80px;font-size:12.5px;-webkit-text-stroke:0.12px #333333;font-weight:400;color:#333333;letter-spacing:0.450px">Function plugins</div>
<div class="t" style="left:359.10px;top:866.80px;font-size:12.5px;-webkit-text-stroke:0.12px #333333;font-weight:400;color:#333333;letter-spacing:0.513px">Workflow Configuration</div>
<div class="t" style="left:549.40px;top:866.80px;font-size:12.5px;-webkit-text-stroke:0.12px #333333;font-weight:400;color:#333333;letter-spacing:0.393px">F.WorkflowConfig.StandaloneTask.MAM.Annotationtool</div>
<div class="t" style="left:927.60px;top:866.80px;font-size:12.5px;-webkit-text-stroke:0.12px #0b9be0;font-weight:400;color:#0b9be0;letter-spacing:0.517px">Parameter definitions</div>
</body></html>
